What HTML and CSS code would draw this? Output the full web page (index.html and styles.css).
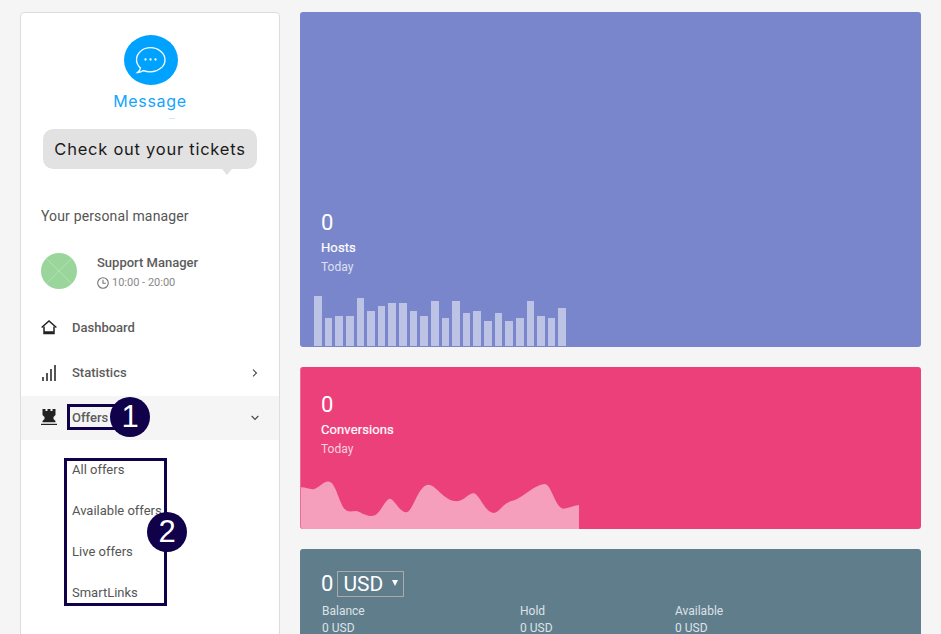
FILE: index.html
```html
<!DOCTYPE html>
<html lang="en">
<head>
    <meta charset="UTF-8">
    <meta name="viewport" content="width=device-width, initial-scale=1.0">
    <title>Dashboard</title>
    <link rel="stylesheet" href="styles.css">
</head>
<body>
    <div class="page">
        <aside class="sidebar">
            <div class="promo">
                <div class="promo-icon">
                    <svg width="32" height="29" viewBox="0 0 32 28" fill="none" stroke="#fff" stroke-width="1.300">
                        <path d="M2.500 26c2.300 0 4.500-.7 6-1.900 2 .8 4.300 1.200 7 1.200C23.100 25.300 30 20 30 13.400S23.100 1.200 15.500 1.200 1.500 6.500 1.500 13.100c0 3.400 1.400 6.300 4 8.300-.2 1.800-1.300 3.400-3 4.600z"/>
                        <circle cx="10.500" cy="13" r=".5" fill="#fff"/>
                        <circle cx="15.500" cy="13" r=".5" fill="#fff"/>
                        <circle cx="20.500" cy="13" r=".5" fill="#fff"/>
                    </svg>
                </div>
                <div class="promo-title">Message</div>
                <div class="promo-bubble">Check out your tickets</div>
            </div>

            <div class="manager-title">Your personal manager</div>
            <div class="manager">
                <svg class="manager-photo" width="36" height="36" viewBox="0 0 36 36">
                    <circle cx="18" cy="18" r="18" fill="#9ad59c"/>
                    <path d="M5 5l26 26M31 5L5 31" stroke="#c3e6c4" stroke-width=".6"/>
                </svg>
                <div class="manager-info">
                    <div class="manager-name">Support Manager</div>
                    <div class="manager-time">
                        <svg width="12" height="12" viewBox="0 0 12 12" fill="none" stroke="#757575" stroke-width="1.100">
                            <circle cx="6" cy="6" r="5.300"/>
                            <path d="M6 2.800V6.300H8.800"/>
                        </svg>
                        10:00 - 20:00
                    </div>
                </div>
            </div>

            <nav class="nav">
                <div class="nav-item">
                    <svg class="nav-icon" width="16" height="15" viewBox="0 0 16 15" fill="none" stroke="#222" stroke-width="1.500">
                        <path d="M.6 7.500L8 1l7.400 6.500"/>
                        <path d="M3 6.500v7h10v-7"/>
                        <path d="M3 12.500h10" stroke-width="2.500"/>
                    </svg>
                    Dashboard
                </div>
                <div class="nav-item">
                    <svg class="nav-icon" width="16" height="16" viewBox="0 0 16 16" fill="#555">
                        <rect x="1" y="12" width="2" height="4"/>
                        <rect x="5" y="8" width="2" height="8"/>
                        <rect x="9" y="4" width="2" height="12"/>
                        <rect x="13" y="0" width="2" height="16"/>
                    </svg>
                    Statistics
                    <svg class="nav-arrow" width="6" height="8" viewBox="0 0 6 8" fill="none" stroke="#444" stroke-width="1.100"><path d="M1 .7L4.500 4 1 7.300"/></svg>
                </div>
                <div class="nav-item nav-item-active">
                    <svg class="nav-icon" width="16" height="17" viewBox="0 0 16 17" fill="#222">
                        <path d="M1.500 0h3v2h2V0h3v2h2V0h3v6l-2 2v2l2 2v1.300H1.500V12l2-2V8l-2-2z"/>
                        <rect x="0" y="14.800" width="16" height="1.200"/>
                    </svg>
                    Offers
                    <svg class="nav-arrow nav-arrow-down" width="8" height="6" viewBox="0 0 8 6" fill="none" stroke="#444" stroke-width="1.100"><path d="M.7 1L4 4.500 7.300 1"/></svg>
                    <span class="mark-box mark-box-offers"></span>
                    <span class="mark-num mark-num-offers">1</span>
                </div>
                <div class="subnav">
                    <div class="subnav-item">All offers</div>
                    <div class="subnav-item">Available offers</div>
                    <div class="subnav-item">Live offers</div>
                    <div class="subnav-item">SmartLinks</div>
                    <span class="mark-box mark-box-sub"></span>
                    <span class="mark-num mark-num-sub">2</span>
                </div>
            </nav>
        </aside>

        <main class="cards">
            <section class="card card-hosts">
                <div class="card-num">0</div>
                <div class="card-label">Hosts</div>
                <div class="card-sub">Today</div>
                <div class="bars" id="bars"></div>
            </section>

            <section class="card card-conv">
                <div class="card-num">0</div>
                <div class="card-label">Conversions</div>
                <div class="card-sub">Today</div>
                <svg class="area" width="278" height="50" viewBox="18 280 834 150">
                    <path fill="#f59fbc" d="M18 430V305C35 305 45 313 58 310C75 305 85 285 103 288C125 292 135 370 158 376C172 380 180 372 195 380C210 388 225 395 240 389C258 380 270 340 285 339C298 340 315 382 335 380C355 375 370 298 400 297C425 298 445 345 485 347C510 345 520 322 537 323C555 328 570 382 597 382C615 378 625 352 650 346C680 340 720 295 750 295C770 298 780 365 805 369C820 368 835 360 852 358V430Z"/>
                </svg>
            </section>

            <section class="card card-balance">
                <div class="balance-top">
                    <span>0</span>
                    <div class="currency">USD<span class="currency-arrow"></span></div>
                </div>
                <div class="balance-row">
                    <div class="balance-col balance-col-a">Balance<br>0 USD</div>
                    <div class="balance-col balance-col-b">Hold<br>0 USD</div>
                    <div class="balance-col">Available<br>0 USD</div>
                </div>
            </section>
        </main>
    </div>

    <script>
        const heights = [50, 28, 30, 30, 48, 35, 40, 43, 43, 35, 30, 45, 28, 45, 33, 35, 25, 33, 25, 28, 45, 30, 28, 38];
        const bars = document.getElementById('bars');
        heights.forEach((h) => {
            const bar = document.createElement('div');
            bar.className = 'bar';
            bar.style.height = h + 'px';
            bars.appendChild(bar);
        });
    </script>
</body>
</html>
```

FILE: styles.css
```css
html, body {
    margin: 0;
    padding: 0;
    height: 634px;
    overflow: hidden;
}
body {
    font-family: Roboto, Arial, sans-serif;
    background-color: #f5f5f5;
    color: #444;
}
.page {
    display: flex;
    gap: 20px;
    padding: 12px 20px;
    align-items: flex-start;
}
.sidebar {
    width: 260px;
    height: 700px;
    flex-shrink: 0;
    box-sizing: border-box;
    background-color: #fff;
    border: 1px solid #ddd;
    border-radius: 4px;
}
.promo {
    position: relative;
    display: flex;
    flex-direction: column;
    align-items: center;
    padding-top: 22px;
}
.promo::after {
    content: "";
    position: absolute;
    left: 148px;
    top: 105px;
    width: 6px;
    height: 1px;
    background-color: #cdeaff;
}
.promo-icon {
    width: 54px;
    height: 50px;
    margin-left: 1px;
    border-radius: 50%;
    background-color: #00a2ff;
    display: flex;
    align-items: center;
    justify-content: center;
}
.promo-title {
    margin-top: 5px;
    font-family: Inter, Arial, sans-serif;
    font-size: 16px;
    line-height: 22px;
    letter-spacing: 0.7px;
    color: #14a5fb;
}
.promo-bubble {
    position: relative;
    box-sizing: border-box;
    width: 214px;
    margin-top: 17px;
    height: 40px;
    line-height: 40px;
    text-align: center;
    border-radius: 10px;
    background-color: #e2e2e2;
    color: #1a1a1a;
    font-family: Inter, Arial, sans-serif;
    font-size: 16.500px;
    letter-spacing: 0.75px;
    white-space: nowrap;
}
.promo-bubble::after {
    content: "";
    position: absolute;
    left: 179px;
    top: 40px;
    border-left: 5px solid transparent;
    border-right: 5px solid transparent;
    border-top: 6px solid #e2e2e2;
}
.manager-title {
    margin: 38px 0 0 20px;
    font-size: 14px;
    line-height: 18px;
    letter-spacing: 0.15px;
    color: #555;
}
.manager {
    display: flex;
    align-items: flex-start;
    gap: 20px;
    margin: 28px 0 0 20px;
}
.manager-info {
    padding-top: 1px;
}
.manager-name {
    font-size: 13px;
    font-weight: 500;
    line-height: 18px;
    color: #5c5c5c;
}
.manager-time {
    display: flex;
    align-items: center;
    gap: 3px;
    margin-top: 3px;
    height: 15px;
    font-size: 11px;
    line-height: 15px;
    color: #888;
}
.nav {
    margin-top: 15px;
}
.nav-item {
    position: relative;
    display: flex;
    align-items: center;
    height: 45px;
    padding-left: 20px;
    font-size: 13px;
    font-weight: 500;
    color: #5c5c5c;
}
.nav-icon {
    width: 16px;
    margin-right: 15px;
}
.nav-arrow {
    position: absolute;
    left: 231px;
    top: 19px;
}
.nav-arrow-down {
    left: 230px;
}
.nav-item-active {
    box-sizing: border-box;
    margin-top: 1px;
    height: 44px;
    padding-bottom: 2px;
    background-color: #f5f5f5;
}
.subnav {
    position: relative;
    padding: 9px 0 0 51px;
}
.subnav-item {
    height: 41px;
    line-height: 41px;
    font-size: 13px;
    color: #555;
}
.mark-box {
    position: absolute;
    box-sizing: border-box;
    border: 3px solid #11004a;
}
.mark-box-offers {
    left: 46px;
    top: 8px;
    width: 50px;
    height: 26px;
}
.mark-box-sub {
    left: 43px;
    top: 18px;
    width: 103px;
    height: 148px;
}
.mark-num {
    position: absolute;
    width: 40px;
    height: 40px;
    border-radius: 50%;
    background-color: #11004a;
    color: #fff;
    font-family: "Liberation Sans", Arial, sans-serif;
    font-size: 31px;
    font-weight: 400;
    line-height: 40px;
    text-align: center;
}
.mark-num-offers {
    left: 89px;
    top: 1px;
}
.mark-num-sub {
    left: 126px;
    top: 72px;
}
.cards {
    flex: 1;
    display: flex;
    flex-direction: column;
    gap: 20px;
}
.card {
    position: relative;
    display: flex;
    flex-direction: column;
    justify-content: flex-end;
    box-sizing: border-box;
    padding-left: 21px;
    border-radius: 3px;
    color: #fff;
    overflow: hidden;
}
.card-num {
    font-size: 22px;
    line-height: 24px;
}
.card-label {
    margin: 3px 0 -1px;
    font-size: 13px;
    line-height: 20px;
    letter-spacing: 0.1px;
    -webkit-text-stroke: 0.2px #fff;
}
.card-sub {
    font-size: 12px;
    line-height: 20px;
    opacity: .75;
}
.card-hosts {
    height: 335px;
    padding-bottom: 70px;
    background-color: #7986cb;
}
.card-conv {
    height: 162px;
    padding-bottom: 70px;
    background-color: #ec407a;
    border-left: 1px solid #f06c98;
}
.card-conv .card-num,
.card-conv .card-label,
.card-conv .card-sub {
    margin-left: -1px;
}
.bars {
    position: absolute;
    left: 14px;
    bottom: 1px;
    width: 252px;
    display: flex;
    align-items: flex-end;
    gap: 3px;
}
.bar {
    flex: 1;
    background-color: rgba(255, 255, 255, 0.5);
}
.area {
    position: absolute;
    left: 0;
    bottom: 0;
}
.card-balance {
    height: 120px;
    justify-content: flex-start;
    padding-top: 22px;
    background-color: #607d8b;
}
.balance-top {
    display: flex;
    align-items: center;
    gap: 4px;
    font-size: 22px;
    line-height: 26px;
}
.currency {
    display: flex;
    align-items: center;
    box-sizing: border-box;
    height: 26px;
    width: 67px;
    padding-left: 5px;
    border: 1px solid #aaa;
    font-size: 21px;
}
.currency-arrow {
    margin-left: 9px;
    margin-bottom: 3px;
    border-left: 3px solid transparent;
    border-right: 3px solid transparent;
    border-top: 6px solid #fff;
}
.balance-row {
    display: flex;
    margin: 6px 0 0 1px;
    font-size: 12px;
    line-height: 17px;
    color: #dde3e8;
}
.balance-col-a {
    width: 198px;
}
.balance-col-b {
    width: 155px;
}
```
